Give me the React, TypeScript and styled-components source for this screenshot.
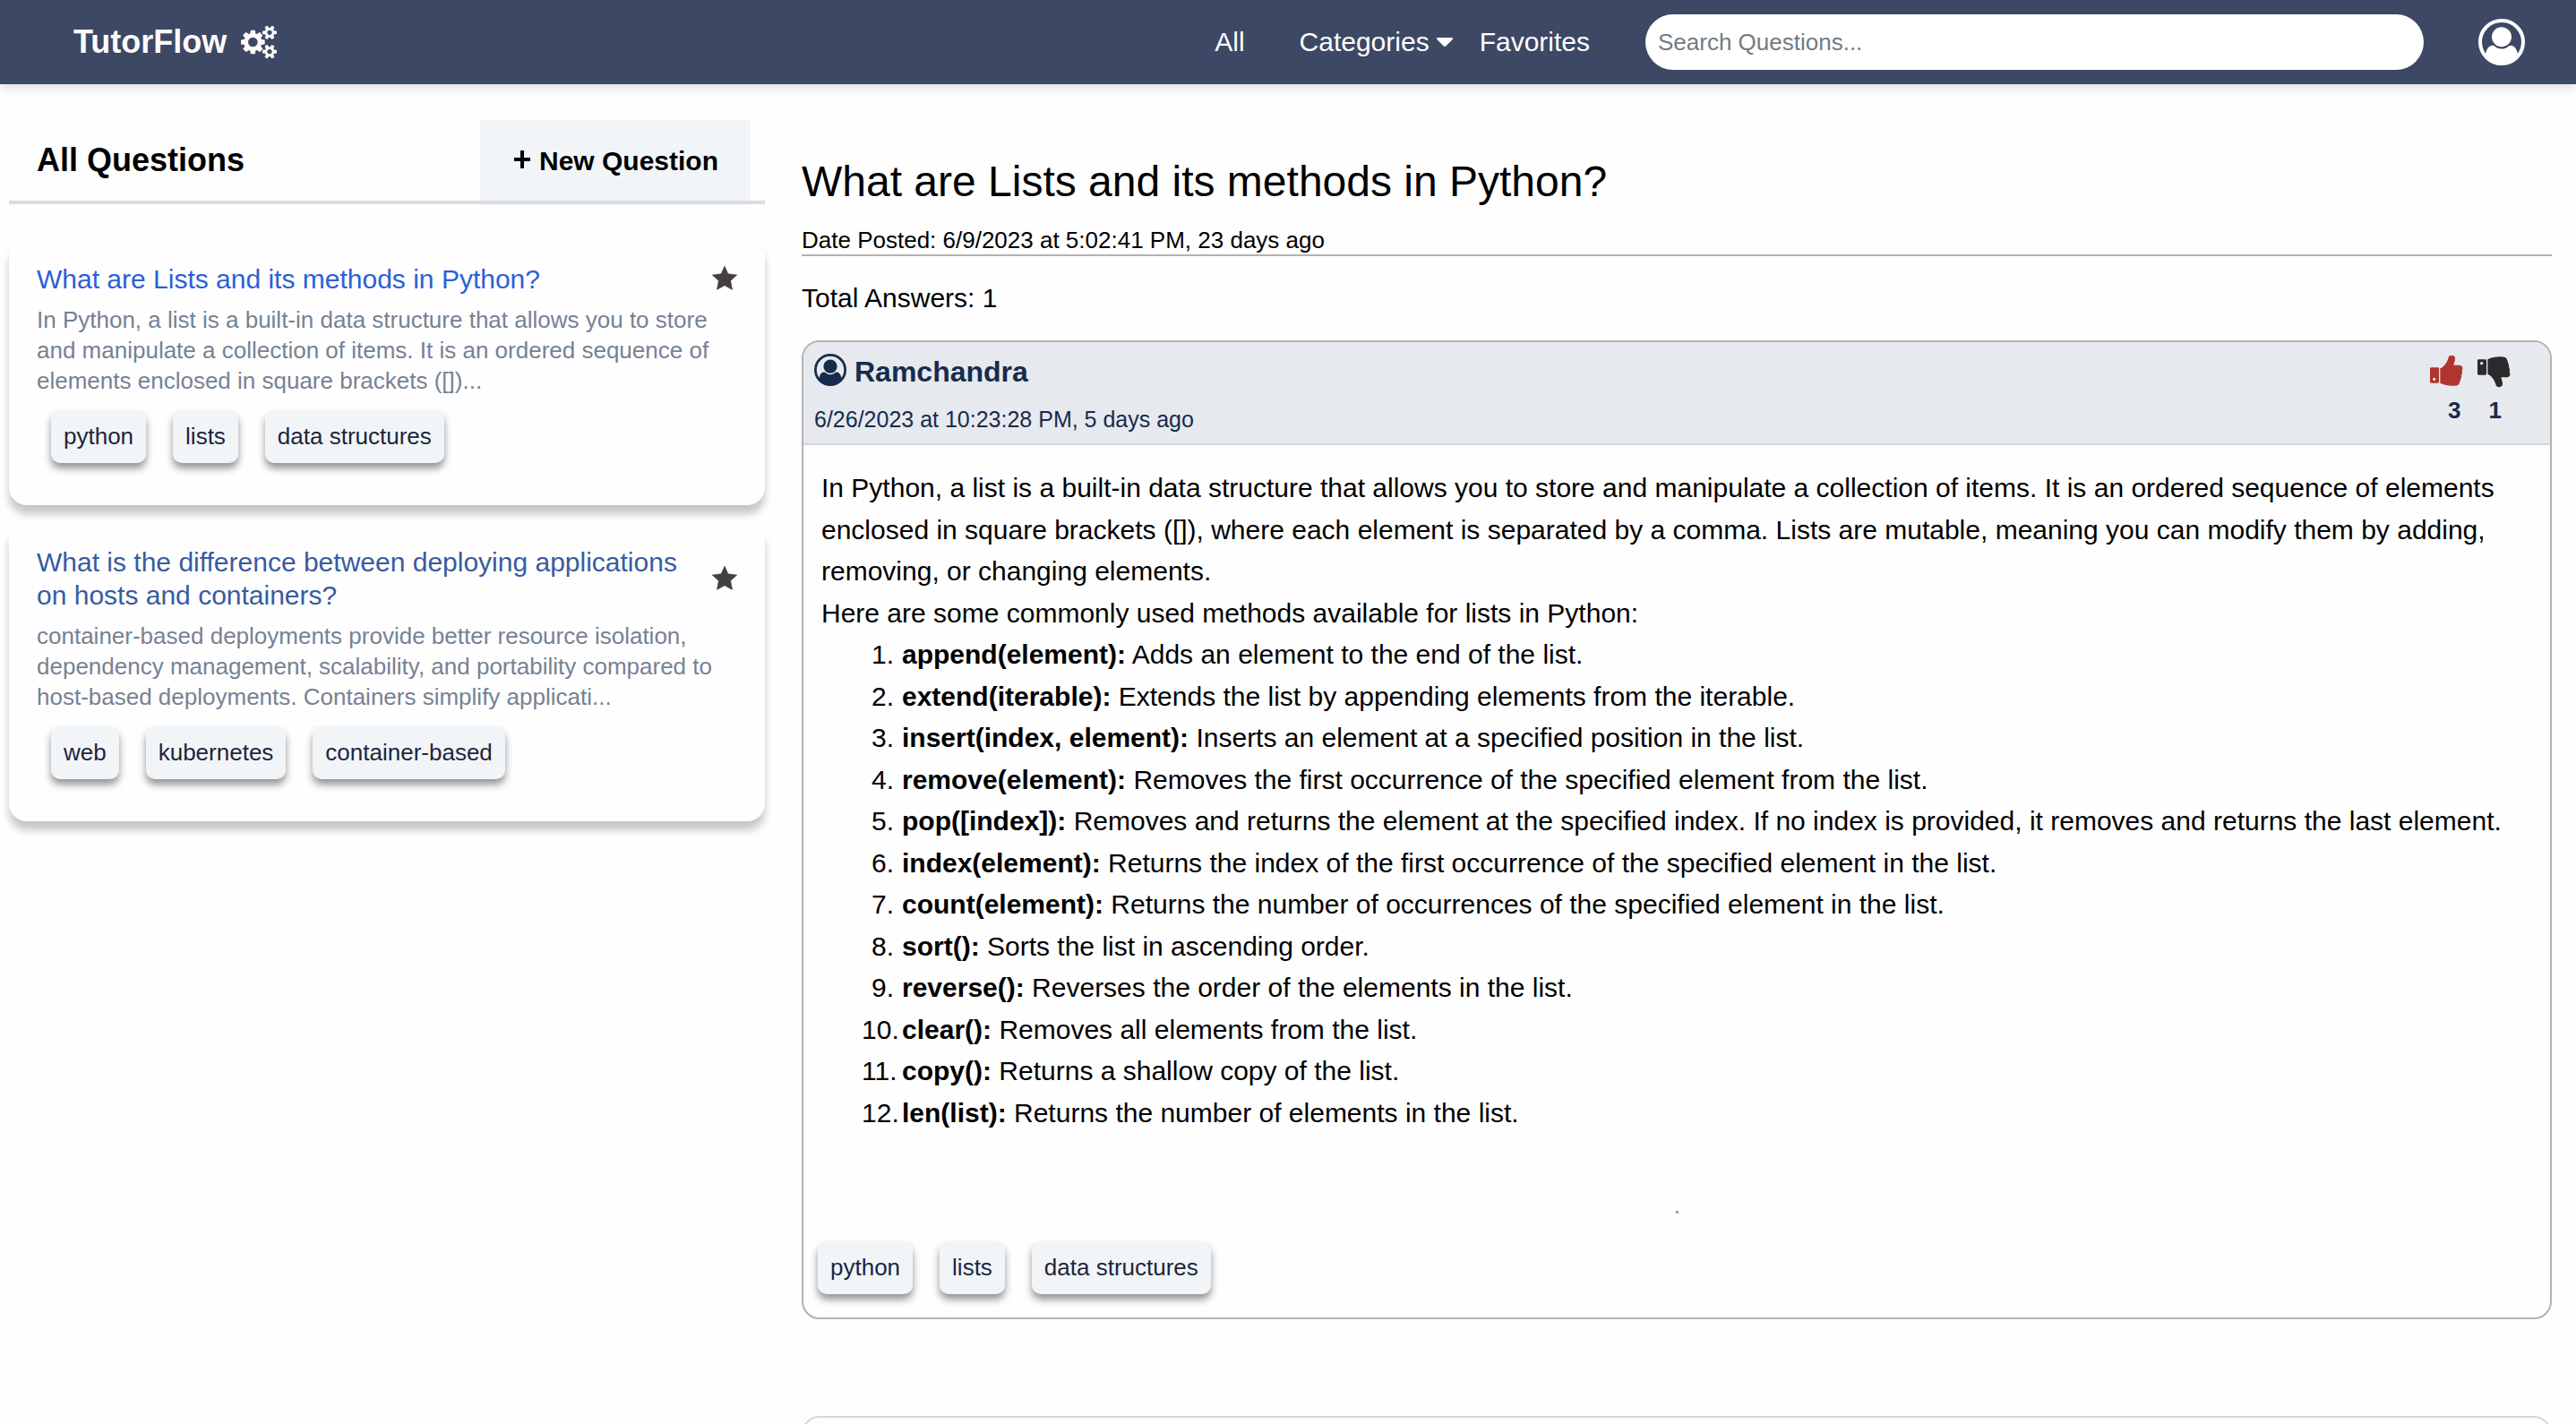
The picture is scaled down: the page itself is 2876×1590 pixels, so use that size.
import React from "react";
import styled, { createGlobalStyle } from "styled-components";

const GlobalStyle = createGlobalStyle`
  *, *::before, *::after { box-sizing: border-box; }
  body {
    margin: 0;
    background: #fefefe;
    color: #000;
    font-family: "Liberation Sans", Arial, Helvetica, sans-serif;
    font-size: 30px;
  }
  h1, h2, h3, p, ol, ul { margin: 0; padding: 0; }
  button { font: inherit; color: inherit; border: 0; padding: 0; background: none; cursor: pointer; }
  a { color: inherit; text-decoration: none; }
  svg { display: block; flex: none; }
`;

const Page = styled.div`
  height: 100vh;
  overflow: hidden;
`;

const TopBar = styled.header`
  display: flex;
  align-items: center;
  min-height: 94px;
  padding: 0 57px 0 82px;
  background: #3d4865;
  color: #fff;
  box-shadow: 0 4px 12px rgba(60, 20, 20, 0.14);
`;

const Brand = styled.a`
  display: flex;
  align-items: center;
  gap: 16px;
  margin-right: auto;
  color: #fffafa;
  font-size: 36px;
  font-weight: 700;
  line-height: 42px;
`;

const Nav = styled.nav`
  display: flex;
  align-items: center;
  margin-right: 62px;
  line-height: 34px;
`;

const NavLink = styled.a``;

const NavMenu = styled.button`
  display: flex;
  align-items: center;
  gap: 8px;
  margin: 0 30px 0 61px;
  line-height: 34px;
`;

const SearchBox = styled.input`
  flex: 0 1 869px;
  min-width: 0;
  height: 62px;
  margin-right: 61px;
  padding: 0 14px;
  border: 0;
  border-radius: 31px;
  background: #fff;
  color: #222;
  font-family: inherit;
  font-size: 26px;
  &::placeholder { color: #717b85; opacity: 1; }
`;

const Main = styled.main`
  display: grid;
  grid-template-columns: minmax(0, 844fr) minmax(0, 1954fr);
  column-gap: 41px;
  align-items: start;
  padding: 40px 27px 0 10px;
`;

const Sidebar = styled.aside`
  display: flex;
  flex-direction: column;
  gap: 20px;
`;

const SidebarHead = styled.div`
  display: flex;
  align-items: stretch;
  justify-content: space-between;
  margin-bottom: 20px;
  padding: 0 16px 0 31px;
  border-bottom: 4px solid #dcdce0;
`;

const SidebarTitle = styled.h2`
  align-self: center;
  font-size: 36px;
  line-height: 42px;
`;

const NewQuestion = styled.button`
  display: flex;
  align-items: center;
  gap: 10px;
  min-height: 90px;
  padding: 2px 36px 0 38px;
  background: #f1f5f8;
  color: #000;
  font-weight: 700;
  line-height: 34px;
`;

const QuestionCard = styled.article`
  display: flex;
  flex-direction: column;
  padding: 25px 31px 47px;
  border-radius: 20px;
  background: #fefefe;
  box-shadow: 0 10px 10px rgba(0, 0, 0, 0.22);
`;

const QuestionHead = styled.div`
  display: flex;
  align-items: center;
  justify-content: space-between;
  gap: 24px;
`;

const QuestionTitle = styled.h3<{ $active?: boolean }>`
  color: ${(p) => (p.$active ? "#2b5fd9" : "#385b9f")};
  font-size: 30px;
  font-weight: 400;
  line-height: 37px;
`;

const FavoriteButton = styled.button`
  padding-bottom: 2px;
`;

const Excerpt = styled.p`
  margin-top: 10px;
  color: #758294;
  font-size: 26px;
  line-height: 34px;
`;

const Tags = styled.ul`
  display: flex;
  flex-wrap: wrap;
  gap: 30px;
  padding: 0 16px;
  list-style: none;
`;

const Tag = styled.li`
  padding: 14px;
  border-radius: 10px;
  background: #f1f5f8;
  color: #20253c;
  font-size: 26px;
  line-height: 31px;
  box-shadow: 0 6px 8px rgba(0, 0, 0, 0.42);
`;

const CardTags = styled.div`
  margin-top: 16px;
`;

const Detail = styled.section`
  display: flex;
  flex-direction: column;
  padding-top: 41px;
`;

const DetailTitle = styled.h1`
  font-size: 48px;
  font-weight: 400;
  line-height: 56px;
`;

const Posted = styled.p`
  margin-top: 22px;
  padding-bottom: 1px;
  border-bottom: 2px solid #b5b1b1;
  font-size: 26px;
  line-height: 30px;
`;

const Total = styled.p`
  margin: 30px 0;
  line-height: 34px;
`;

const Answer = styled.article`
  overflow: hidden;
  border: 2px solid #b5b1b1;
  border-radius: 20px;
`;

const AnswerHead = styled.header`
  display: flex;
  justify-content: space-between;
  padding: 13px 44px 12px 12px;
  border-bottom: 2px solid #d5d5d5;
  background: #e6e9ee;
  color: #172b4d;
`;

const Author = styled.div`
  display: flex;
  align-items: flex-start;
  gap: 9px;
  margin-bottom: 18px;
  font-size: 32px;
  font-weight: 700;
  line-height: 40px;
`;

const AnswerDate = styled.p`
  font-size: 25px;
  line-height: 30px;
`;

const Votes = styled.div`
  display: flex;
  flex-direction: column;
  gap: 10px;
`;

const VoteButtons = styled.div`
  display: flex;
  align-items: flex-end;
  gap: 16px;
  height: 38px;
`;

const VoteButton = styled.button<{ $tone: string }>`
  color: ${(p) => p.$tone};
`;

const VoteCounts = styled.div`
  display: flex;
  justify-content: flex-end;
  gap: 31px;
  padding-right: 10px;
  font-size: 26px;
  font-weight: 700;
  line-height: 30px;
`;

const AnswerBody = styled.div`
  padding: 25px 20px 86px;
  line-height: 1.55;
`;

const Methods = styled.ol`
  padding-left: 90px;
  list-style: none;
  counter-reset: method;
`;

const Method = styled.li`
  counter-increment: method;
  &::before {
    content: counter(method) ".";
    display: inline-block;
    width: 36px;
    margin-left: -45px;
    margin-right: 9px;
    text-align: right;
    white-space: nowrap;
  }
`;

const Speck = styled.hr`
  width: 3px;
  height: 3px;
  margin: 0 auto;
  border: 0;
  background: #a0a0a0;
`;

const AnswerFooter = styled.footer`
  padding: 31px 0 26px;
`;

const NextPanel = styled.section`
  min-height: 300px;
  margin-top: 108px;
  border: 2px solid #dad6d6;
  border-radius: 20px;
`;

const Gears = () => (
  <svg width="40" height="38" viewBox="0 0 1920 1824" fill="currentColor" fillRule="evenodd" aria-hidden="true">
    <path d="M896 912q0-106-75-181t-181-75-181 75-75 181 75 181 181 75 181-75 75-181zM1280 821v185q0 10-7 19.500t-16 10.500l-155 24q-11 35-32 76 34 48 90 115 7 11 7 20 0 12-7 19-23 30-82.500 89.500t-78.500 59.500q-11 0-21-7l-115-90q-37 19-77 31-11 108-23 155-7 24-30 24h-186q-11 0-20-7.500t-10-17.500l-23-153q-34-10-75-31l-118 89q-7 7-20 7-11 0-21-8-144-133-144-160 0-9 7-19 10-14 41-53t47-61q-23-44-35-82l-152-24q-10-1-17-9.500t-7-19.500v-185q0-10 7-19.500t16-10.500l155-24q11-35 32-76-34-48-90-115-7-11-7-20 0-12 7-20 22-30 82-89t79-59q11 0 21 7l115 90q34-18 77-32 11-108 23-154 7-24 30-24h186q11 0 20 7.500t10 17.500l23 153q34 10 75 31l118-89q8-7 20-7 11 0 21 8 144 133 144 160 0 8-7 19-12 16-42 54t-45 60q23 48 34 82l152 23q10 2 17 10.500t7 19.500z" />
    {[0, -1024].map((dy) => (
      <path
        key={dy}
        transform={`translate(0 ${dy + 16})`}
        d="M1920 1338v140q0 16-149 31-12 27-30 52 51 113 51 138 0 4-4 7-122 71-124 71-8 0-46-47t-52-68q-20 2-30 2t-30-2q-14 21-52 68t-46 47q-2 0-124-71-4-3-4-7 0-25 51-138-18-25-30-52-149-15-149-31v-140q0-16 149-31 13-29 30-52-51-113-51-138 0-4 4-7 4-2 35-20t59-34 30-16q8 0 46 46.500t52 67.500q20-2 30-2t30 2q51-71 92-112l6-2q4 0 124 70 4 3 4 7 0 25-51 138 17 23 30 52 149 15 149 31zM1664 1408q0-52-38-90t-90-38-90 38-38 90q0 53 37.500 90.500t90.500 37.500 90.500-37.500 37.500-90.500z"
      />
    ))}
  </svg>
);

const Avatar = ({ size }: { size: number }) => (
  <svg width={size} height={size} viewBox="0 0 52 52" aria-hidden="true">
    <circle cx="26" cy="26" r="24" fill="none" stroke="currentColor" strokeWidth="4" />
    <circle cx="26" cy="20.300" r="11" fill="currentColor" />
    <path
      d="M8 39.500C9 34 11.500 30 15.500 29.700C18 29.600 19 31.500 21 32.500C24 33.800 28 33.800 31 32.500C33 31.500 34 29.600 36.500 29.700C40.500 30 43 34 44 39.500L43 44C38 49 32 51 26 51S14 49 9 44Z"
      fill="currentColor"
    />
  </svg>
);

const Caret = () => (
  <svg width="18" height="10" viewBox="0 0 18 10" fill="currentColor" aria-hidden="true">
    <path d="M1.500 0H16.500C18 0 18.300 1.300 17.500 2.200L10.200 9.500C9.500 10.200 8.500 10.200 7.800 9.500L.5 2.200C-.3 1.300 0 0 1.500 0Z" />
  </svg>
);

const Plus = () => (
  <svg width="18" height="24" viewBox="0 0 18 24" aria-hidden="true">
    <path d="M9 0V20M0 10H18" stroke="currentColor" strokeWidth="4" />
  </svg>
);

const Star = () => (
  <svg width="28" height="27" viewBox="0 0 28 27" fill="#444040" aria-hidden="true">
    <path
      d="M14 0L17.900 8.700L27.800 10L20.700 16.500L22.600 26.500L14 21.700L5.400 26.500L7.300 16.500L.2 10L10.100 8.700Z"
      stroke="#444040"
      strokeWidth=".5"
      strokeLinejoin="round"
    />
  </svg>
);

const Thumb = ({ down }: { down?: boolean }) => (
  <svg width="37" height="36" viewBox="0 0 111 108" fill="currentColor" aria-hidden="true">
    <g transform={down ? "matrix(1 0 0 -1 0 108)" : "translate(0 -3)"}>
      <path
        fillRule="evenodd"
        d="M4 43H26Q30 43 30 47V91Q30 95 26 95H4Q0 95 0 91V47Q0 43 4 43ZM14 77A5 5 0 1 0 14 87A5 5 0 1 0 14 77Z"
      />
      <path d="M34 46C46 42 58 26 62 9C63 0 84 0 84 12C84 22 80 29 79 35H98C108 35 112 45 107 53C109 59 108 65 105 70C106 75 104 80 102 84C101 90 99 94 97 98C94 104 85 104 75 104C60 104 45 100 34 95Z" />
    </g>
  </svg>
);

const TagList = ({ items }: { items: string[] }) => (
  <Tags>
    {items.map((t) => (
      <Tag key={t}>{t}</Tag>
    ))}
  </Tags>
);

const questions = [
  {
    title: "What are Lists and its methods in Python?",
    excerpt:
      "In Python, a list is a built-in data structure that allows you to store and manipulate a collection of items. It is an ordered sequence of elements enclosed in square brackets ([])...",
    tags: ["python", "lists", "data structures"],
    active: true,
  },
  {
    title: "What is the difference between deploying applications on hosts and containers?",
    excerpt:
      "container-based deployments provide better resource isolation, dependency management, scalability, and portability compared to host-based deployments. Containers simplify applicati...",
    tags: ["web", "kubernetes", "container-based"],
    active: false,
  },
];

const methods: [string, string][] = [
  ["append(element):", "Adds an element to the end of the list."],
  ["extend(iterable):", "Extends the list by appending elements from the iterable."],
  ["insert(index, element):", "Inserts an element at a specified position in the list."],
  ["remove(element):", "Removes the first occurrence of the specified element from the list."],
  [
    "pop([index]):",
    "Removes and returns the element at the specified index. If no index is provided, it removes and returns the last element.",
  ],
  ["index(element):", "Returns the index of the first occurrence of the specified element in the list."],
  ["count(element):", "Returns the number of occurrences of the specified element in the list."],
  ["sort():", "Sorts the list in ascending order."],
  ["reverse():", "Reverses the order of the elements in the list."],
  ["clear():", "Removes all elements from the list."],
  ["copy():", "Returns a shallow copy of the list."],
  ["len(list):", "Returns the number of elements in the list."],
];

export default function App() {
  return (
    <Page>
      <GlobalStyle />
      <TopBar>
        <Brand href="#">
          TutorFlow
          <Gears />
        </Brand>
        <Nav>
          <NavLink href="#all">All</NavLink>
          <NavMenu type="button" aria-haspopup="menu">
            Categories
            <Caret />
          </NavMenu>
          <NavLink href="#favorites">Favorites</NavLink>
        </Nav>
        <SearchBox type="search" placeholder="Search Questions..." aria-label="Search Questions" />
        <button type="button" aria-label="Account">
          <Avatar size={52} />
        </button>
      </TopBar>

      <Main>
        <Sidebar>
          <SidebarHead>
            <SidebarTitle>All Questions</SidebarTitle>
            <NewQuestion type="button">
              <Plus />
              New Question
            </NewQuestion>
          </SidebarHead>
          {questions.map((q) => (
            <QuestionCard key={q.title}>
              <QuestionHead>
                <QuestionTitle $active={q.active}>
                  <a href="#question">{q.title}</a>
                </QuestionTitle>
                <FavoriteButton type="button" aria-label="Favorite">
                  <Star />
                </FavoriteButton>
              </QuestionHead>
              <Excerpt>{q.excerpt}</Excerpt>
              <CardTags>
                <TagList items={q.tags} />
              </CardTags>
            </QuestionCard>
          ))}
        </Sidebar>

        <Detail>
          <DetailTitle>What are Lists and its methods in Python?</DetailTitle>
          <Posted>Date Posted: 6/9/2023 at 5:02:41 PM, 23 days ago</Posted>
          <Total>Total Answers: 1</Total>
          <Answer>
            <AnswerHead>
              <div>
                <Author>
                  <Avatar size={36} />
                  Ramchandra
                </Author>
                <AnswerDate>6/26/2023 at 10:23:28 PM, 5 days ago</AnswerDate>
              </div>
              <Votes>
                <VoteButtons>
                  <VoteButton type="button" $tone="#b0352f" aria-label="Upvote">
                    <Thumb />
                  </VoteButton>
                  <VoteButton type="button" $tone="#2a2a2a" aria-label="Downvote">
                    <Thumb down />
                  </VoteButton>
                </VoteButtons>
                <VoteCounts>
                  <span>3</span>
                  <span>1</span>
                </VoteCounts>
              </Votes>
            </AnswerHead>
            <AnswerBody>
              <p>
                In Python, a list is a built-in data structure that allows you to store and manipulate a collection of
                items. It is an ordered sequence of elements enclosed in square brackets ([]), where each element is
                separated by a comma. Lists are mutable, meaning you can modify them by adding, removing, or changing
                elements.
              </p>
              <p>Here are some commonly used methods available for lists in Python:</p>
              <Methods>
                {methods.map(([name, text]) => (
                  <Method key={name}>
                    <strong>{name}</strong> {text}
                  </Method>
                ))}
              </Methods>
            </AnswerBody>
            <Speck />
            <AnswerFooter>
              <TagList items={["python", "lists", "data structures"]} />
            </AnswerFooter>
          </Answer>
          <NextPanel />
        </Detail>
      </Main>
    </Page>
  );
}
